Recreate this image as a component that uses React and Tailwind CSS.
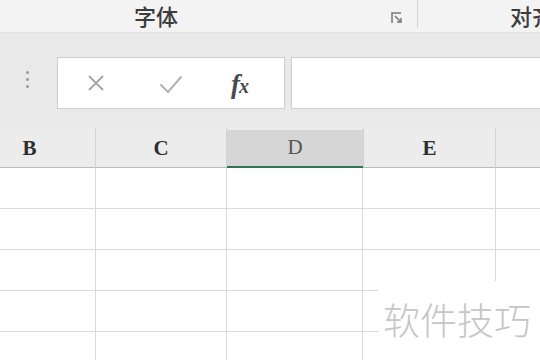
import React from "react";

const cjk = "font-['Noto_Sans_CJK_SC','Noto_Sans',sans-serif]";

function GridRow() {
  return (
    <div className="flex h-[41px] shrink-0 border-b border-[#dadada]">
      <div className="ml-[-36px] w-[132px] shrink-0 border-r border-[#dadada]" />
      <div className="w-[131px] shrink-0 border-r border-[#dadada]" />
      <div className="w-[136px] shrink-0 border-r border-[#dadada]" />
      <div className="w-[133px] shrink-0 border-r border-[#dadada]" />
      <div className="flex-1" />
    </div>
  );
}

export default function App() {
  return (
    <div className="relative w-[540px] h-[360px] overflow-hidden bg-white flex flex-col font-['Liberation_Sans',sans-serif]">
      {/* Ribbon group labels */}
      <div className="h-[32px] shrink-0 bg-[#f3f3f3] flex items-center whitespace-nowrap">
        <span className={`${cjk} ml-[134px] mb-[2px] text-[22px] leading-[30px] font-medium text-[#3c3c3c]`}>字体</span>
        <svg className="ml-[212px] mt-[4px] shrink-0" width="15" height="14" viewBox="0 0 15 14" fill="none" stroke="#777" strokeWidth="1.5">
          <path d="M2 12V2h9" />
          <path d="M5 5l6 6" />
          <path d="M7 11h4V7" />
        </svg>
        <div className="ml-[12px] mb-[4px] w-px h-[28px] bg-[#d4d4d4] shrink-0" />
        <span className={`${cjk} ml-[92px] mb-[2px] text-[22px] leading-[30px] font-medium text-[#3c3c3c]`}>对齐</span>
      </div>

      {/* Formula bar area */}
      <div className="h-[96px] shrink-0 bg-[#e9e9e9] border-t border-[#e2e2e2] flex items-start pt-[24px]">
        <div className="w-[54px] shrink-0 flex flex-col items-center gap-[4px] pt-[14px]">
          <div className="w-[3px] h-[3px] rounded-full bg-[#9a9a9a]" />
          <div className="w-[3px] h-[3px] rounded-full bg-[#9a9a9a]" />
          <div className="w-[3px] h-[3px] rounded-full bg-[#9a9a9a]" />
        </div>
        <div className="ml-[3px] w-[228px] h-[52px] shrink-0 bg-white border border-[#cfcfcf] flex items-center">
          <svg className="ml-[27px] shrink-0" width="22" height="22" viewBox="0 0 22 22" stroke="#a6a6a6" strokeWidth="1.9" fill="none">
            <path d="M4 4l14 14M18 4L4 18" />
          </svg>
          <svg className="ml-[52px] mt-[4px] shrink-0" width="24" height="20" viewBox="0 0 24 20" stroke="#b2b2b2" strokeWidth="2" fill="none" strokeLinecap="round">
            <path d="M2 10l7 7L22 2" />
          </svg>
          <span className="ml-[48px] mt-[2px] font-['Liberation_Serif',serif] italic font-bold text-[27px] leading-none text-[#4a4a4a] tracking-[-1px]">
            f<span className="text-[20px]">x</span>
          </span>
        </div>
        <div className="ml-[6px] flex-1 h-[52px] bg-white border border-[#cfcfcf] border-r-0" />
      </div>

      {/* Column header */}
      <div className="h-[40px] shrink-0 flex bg-[#ececec] font-['Liberation_Serif',serif] font-bold text-[21px] text-[#2e2e2e]">
        <div className="ml-[-36px] w-[132px] shrink-0 flex items-center justify-center border-r border-[#d2d2d2] border-b border-b-[#bcbcbc] pt-[2px]">B</div>
        <div className="w-[131px] shrink-0 flex items-center justify-center border-r border-[#d2d2d2] border-b border-b-[#bcbcbc] pt-[2px]">C</div>
        <div className="w-[136px] shrink-0 flex flex-col">
          <div className="h-[2px] bg-[#ececec]" />
          <div className="flex-1 flex items-center justify-center bg-[#d6d6d6] border-b-2 border-[#2f7453] text-[#555] font-normal">D</div>
        </div>
        <div className="w-[133px] shrink-0 flex items-center justify-center border-r border-l border-[#d2d2d2] border-b border-b-[#bcbcbc] pt-[2px]">E</div>
        <div className="flex-1 border-b border-[#bcbcbc]" />
      </div>

      {/* Grid */}
      <GridRow />
      <GridRow />
      <GridRow />
      <GridRow />
      <GridRow />

      {/* Watermark */}
      <div className="absolute left-[378px] top-[281px] right-0 bottom-0 bg-white flex items-start">
        <span className={`${cjk} ml-[5px] mt-[16px] text-[37px] leading-[44px] font-light text-[#c6c6c6] whitespace-nowrap`}>软件技巧</span>
      </div>
    </div>
  );
}
